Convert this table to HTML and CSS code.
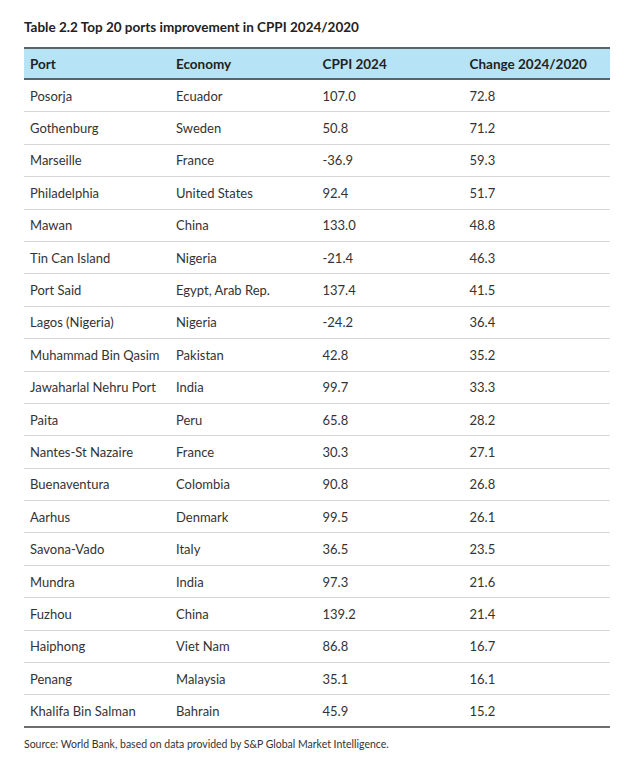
FILE: index.html
```html
<!DOCTYPE html>
<html>
<head>
<meta charset="utf-8">
<link rel="stylesheet" href="styles.css">
</head>
<body>
<div class="page">
  <h1 class="title">Table 2.2 Top 20 ports improvement in CPPI 2024/2020</h1>
  <div class="table">
    <div class="row head">
      <div class="cell">Port</div><div class="cell">Economy</div><div class="cell">CPPI 2024</div><div class="cell">Change 2024/2020</div>
    </div>
    <div class="row"><div class="cell">Posorja</div><div class="cell">Ecuador</div><div class="cell">107.0</div><div class="cell">72.8</div></div>
    <div class="row"><div class="cell">Gothenburg</div><div class="cell">Sweden</div><div class="cell">50.8</div><div class="cell">71.2</div></div>
    <div class="row"><div class="cell">Marseille</div><div class="cell">France</div><div class="cell">-36.9</div><div class="cell">59.3</div></div>
    <div class="row"><div class="cell">Philadelphia</div><div class="cell">United States</div><div class="cell">92.4</div><div class="cell">51.7</div></div>
    <div class="row"><div class="cell">Mawan</div><div class="cell">China</div><div class="cell">133.0</div><div class="cell">48.8</div></div>
    <div class="row"><div class="cell">Tin Can Island</div><div class="cell">Nigeria</div><div class="cell">-21.4</div><div class="cell">46.3</div></div>
    <div class="row"><div class="cell">Port Said</div><div class="cell">Egypt, Arab Rep.</div><div class="cell">137.4</div><div class="cell">41.5</div></div>
    <div class="row"><div class="cell">Lagos (Nigeria)</div><div class="cell">Nigeria</div><div class="cell">-24.2</div><div class="cell">36.4</div></div>
    <div class="row"><div class="cell">Muhammad Bin Qasim</div><div class="cell">Pakistan</div><div class="cell">42.8</div><div class="cell">35.2</div></div>
    <div class="row"><div class="cell">Jawaharlal Nehru Port</div><div class="cell">India</div><div class="cell">99.7</div><div class="cell">33.3</div></div>
    <div class="row"><div class="cell">Paita</div><div class="cell">Peru</div><div class="cell">65.8</div><div class="cell">28.2</div></div>
    <div class="row"><div class="cell">Nantes-St Nazaire</div><div class="cell">France</div><div class="cell">30.3</div><div class="cell">27.1</div></div>
    <div class="row"><div class="cell">Buenaventura</div><div class="cell">Colombia</div><div class="cell">90.8</div><div class="cell">26.8</div></div>
    <div class="row"><div class="cell">Aarhus</div><div class="cell">Denmark</div><div class="cell">99.5</div><div class="cell">26.1</div></div>
    <div class="row"><div class="cell">Savona-Vado</div><div class="cell">Italy</div><div class="cell">36.5</div><div class="cell">23.5</div></div>
    <div class="row"><div class="cell">Mundra</div><div class="cell">India</div><div class="cell">97.3</div><div class="cell">21.6</div></div>
    <div class="row"><div class="cell">Fuzhou</div><div class="cell">China</div><div class="cell">139.2</div><div class="cell">21.4</div></div>
    <div class="row"><div class="cell">Haiphong</div><div class="cell">Viet Nam</div><div class="cell">86.8</div><div class="cell">16.7</div></div>
    <div class="row"><div class="cell">Penang</div><div class="cell">Malaysia</div><div class="cell">35.1</div><div class="cell">16.1</div></div>
    <div class="row last"><div class="cell">Khalifa Bin Salman</div><div class="cell">Bahrain</div><div class="cell">45.9</div><div class="cell">15.2</div></div>
  </div>
  <p class="source">Source: World Bank, based on data provided by S&amp;P Global Market Intelligence.</p>
</div>
</body>
</html>
```

FILE: styles.css
```css
* { box-sizing: border-box; }
html, body { margin: 0; padding: 0; background: #ffffff; }
body { font-family: Lato, "Noto Sans", "Liberation Sans", sans-serif; color: #333333; }
.page { padding: 19px 16px 0 24px; width: 626px; }
.title { margin: 0 0 12px 0; font-size: 13.5px; line-height: 16px; font-weight: 700; color: #222222; }
.table { width: 586px; }
.row { display: grid; grid-template-columns: 146px 146.5px 147px 146.5px; height: 32.4px; border-bottom: 1px solid #d6d6d6; align-items: center; font-size: 13px; }
.cell { padding-left: 6px; white-space: nowrap; }
.row.head { height: 33px; background: #b6e4f6; border-top: 2px solid #5b6366; border-bottom: 2px solid #5b6366; font-weight: 700; color: #222222; font-size: 13.5px; }
.row.last { border-bottom: 2px solid #6e6e6e; }
.source { margin: 9px 0 0 0; font-size: 10.5px; line-height: 14px; color: #333333; }
```
